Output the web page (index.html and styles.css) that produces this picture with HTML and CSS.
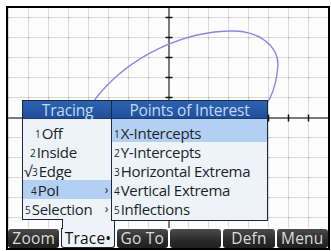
FILE: index.html
```html
<!DOCTYPE html>
<html>
<head>
<meta charset="utf-8">
<link rel="stylesheet" href="styles.css">
</head>
<body>
<div class="screen">
  <div class="plot">
    <svg class="graph" width="320" height="220" viewBox="0 0 320 220">
      <defs>
        <pattern id="grid" width="20" height="20" patternUnits="userSpaceOnUse" x="0" y="9">
          <path d="M0.5 0V20M0 0.5H20" stroke="#dcdcdc" stroke-width="1" fill="none"/>
          <path d="M0.5 -1.5V2.5M-1.5 0.5H2.5" stroke="#c4c4c4" stroke-width="1" fill="none"/>
        </pattern>
      </defs>
      <rect x="0" y="0" width="320" height="220" fill="url(#grid)"/>
      <rect x="160" y="0" width="2" height="220" fill="#7a7a7a"/>
      <rect x="0" y="109" width="320" height="2" fill="#7a7a7a"/>
      <g stroke="#111" stroke-width="1.5">
        <path d="M157.5 9.5H164.5M157.5 29.5H164.5M157.5 49.5H164.5M157.5 69.5H164.5M157.5 89.5H164.5M157.5 129.5H164.5M157.5 149.5H164.5M157.5 169.5H164.5M157.5 189.5H164.5M157.5 209.5H164.5"/>
        <path d="M180.5 106.5V113.5M200.5 106.5V113.5M220.5 106.5V113.5M240.5 106.5V113.5M260.5 106.5V113.5M280.5 106.5V113.5M300.5 106.5V113.5M140.5 106.5V113.5M120.5 106.5V113.5M100.5 106.5V113.5M80.5 106.5V113.5M60.5 106.5V113.5M40.5 106.5V113.5M20.5 106.5V113.5"/>
      </g>
      <path d="M88 90 C122 47 177 23 225 23 C250 23 270 37 270 57 C269 70 267 80 262 90 C247 122 192 142 142 132 C102 122 77 107 88 90 Z" fill="none" stroke="#8a87e2" stroke-width="1.4"/>
    </svg>

    <div class="menu tracing">
      <div class="menu-title">Tracing</div>
      <ul class="menu-list">
        <li class="item ti-1"><span class="num">1</span>Off</li>
        <li class="item ti-2"><span class="num">2</span>Inside</li>
        <li class="item ti-3"><span class="check">√</span><span class="num">3</span>Edge</li>
        <li class="item ti-4 selected"><span class="num">4</span>PoI<span class="more">›</span></li>
        <li class="item ti-5"><span class="num">5</span>Selection<span class="more">›</span></li>
      </ul>
    </div>

    <div class="menu poi">
      <div class="menu-title">Points of Interest</div>
      <ul class="menu-list">
        <li class="item selected"><span class="num">1</span>X-Intercepts</li>
        <li class="item"><span class="num">2</span>Y-Intercepts</li>
        <li class="item"><span class="num">3</span>Horizontal Extrema</li>
        <li class="item"><span class="num">4</span>Vertical Extrema</li>
        <li class="item"><span class="num">5</span>Inflections</li>
      </ul>
    </div>
  </div>

  <div class="softkeys">
    <div class="key">Zoom</div>
    <div class="key active">Trace•</div>
    <div class="key">Go To</div>
    <div class="key"></div>
    <div class="key">Defn</div>
    <div class="key">Menu</div>
  </div>
</div>
</body>
</html>
```
FILE: styles.css
```css
* { box-sizing: border-box; }

html, body {
  margin: 0;
  padding: 0;
  background: #ffffff;
}

body {
  padding: 6px 0 0 6px;
  font-family: "Open Sans", "Noto Sans", sans-serif;
}

.screen {
  width: 324px;
  height: 244px;
  border: 2px solid #000;
  background: #fdfdfd;
  display: flex;
  flex-direction: column;
}

.plot {
  position: relative;
  height: 220px;
  flex: none;
}

.graph {
  display: block;
}

.menu {
  position: absolute;
  top: 92px;
  background: #edf3f7;
  border: 1px solid #1c2740;
}

.tracing {
  left: 14px;
  width: 91px;
  height: 120px;
}

.tracing::after {
  content: "";
  position: absolute;
  left: 39px;
  top: 100%;
  width: 51px;
  height: 10px;
  background: #edf3f7;
  border-left: 1px solid #1c2740;
  border-right: 1px solid #1c2740;
}

.poi {
  left: 103px;
  width: 157px;
  height: 121px;
}

.menu-title {
  height: 18px;
  line-height: 19px;
  text-align: center;
  font-size: 15.5px;
  letter-spacing: -0.2px;
  color: #c6d9f4;
  background: linear-gradient(#2d63b2, #1f4f9a);
  border-bottom: 1px solid #1c3a70;
}

.menu-list {
  list-style: none;
  margin: 0;
  padding: 0;
}

.item {
  position: relative;
  height: 19px;
  line-height: 20px;
  font-size: 15px;
  letter-spacing: -0.3px;
  color: #1b1f2a;
  white-space: nowrap;
  padding-left: 2px;
}

.item:first-child {
  height: 23px;
  padding-top: 4px;
}

.item.selected {
  background: #b3cff2;
}

.num {
  font-size: 10px;
  letter-spacing: 0;
  position: relative;
  top: -1px;
  margin-right: 1px;
}

.check {
  position: absolute;
  left: 1px;
  top: 0;
  font-size: 15px;
}

.more {
  position: absolute;
  right: 4px;
  top: 0;
  font-size: 12px;
}

.ti-1 { padding-left: 12px; }
.ti-2 { padding-left: 7px; }
.ti-3 { padding-left: 9px; }
.ti-4 { padding-left: 8px; }
.ti-5 { padding-left: 2px; }

.softkeys {
  display: flex;
  gap: 2px;
  height: 20px;
  padding-top: 1px;
  background: #fdfdfd;
}

.key {
  flex: 1;
  height: 19px;
  line-height: 19px;
  text-align: center;
  font-size: 15.5px;
  letter-spacing: 0.2px;
  color: #dcdcdc;
  background: linear-gradient(#4c4c4c, #2a2a2a 60%, #202020);
  border-radius: 3px;
}

.key.active {
  margin-top: -1px;
  height: 20px;
  line-height: 20px;
  color: #111;
  background: #edf3f7;
  border: 1px solid #1c2740;
  border-top: none;
  border-radius: 0 0 3px 3px;
}
```
